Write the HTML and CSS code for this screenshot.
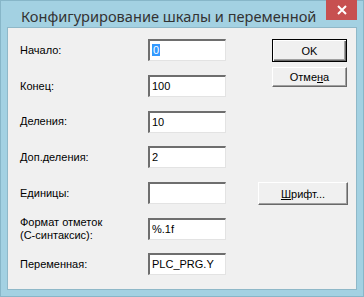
FILE: index.html
```html
<!DOCTYPE html>
<html lang="ru">
<head>
    <meta charset="UTF-8">
    <title>Конфигурирование шкалы и переменной</title>
    <link rel="stylesheet" href="styles.css">
</head>
<body>
    <div class="window">
        <div class="titlebar">
            <span class="title">Конфигурирование шкалы и переменной</span>
            <button class="close-btn">
                <svg width="10" height="10" viewBox="0 0 10 10">
                    <path d="M1 1 L9 9 M9 1 L1 9" stroke="#fff" stroke-width="2"/>
                </svg>
            </button>
        </div>

        <div class="client">
            <div class="form">
                <label class="label">Начало:</label>
                <div class="field"><span class="selected">0</span></div>

                <label class="label">Конец:</label>
                <div class="field">100</div>

                <label class="label">Деления:</label>
                <div class="field">10</div>

                <label class="label">Доп.деления:</label>
                <div class="field">2</div>

                <label class="label">Единицы:</label>
                <div class="field"></div>

                <label class="label">Формат отметок<br>(С-синтаксис):</label>
                <div class="field">%.1f</div>

                <label class="label">Переменная:</label>
                <div class="field">PLC_PRG.Y</div>

                <div class="buttons">
                    <button class="btn btn-default">OK</button>
                    <button class="btn btn-cancel">Отме<u>н</u>а</button>
                    <button class="btn btn-font"><u>Ш</u>рифт...</button>
                </div>
            </div>
        </div>
    </div>
</body>
</html>
```

FILE: styles.css
```css
body {
    margin: 0;
    background-color: #fff;
}

.window {
    width: 364px;
    height: 297px;
    box-sizing: border-box;
    background-color: #a3d1e2;
    border: 1px solid #87b6c8;
    display: flex;
    flex-direction: column;
}

.titlebar {
    height: 29px;
    display: flex;
    align-items: flex-start;
}

.title {
    font-family: "Noto Sans", sans-serif;
    font-size: 14.6px;
    color: #333;
    margin-left: 20px;
    margin-top: 5px;
}

.close-btn {
    margin-left: auto;
    margin-right: 6px;
    width: 31px;
    height: 20px;
    margin-top: -1px;
    border: none;
    padding: 0;
    background-color: #c75050;
    display: flex;
    align-items: center;
    justify-content: center;
}

.client {
    margin: 0 6px 6px 6px;
    flex: 1;
    background-color: #f0f0f0;
    border: 1px solid #8fb8c8;
    font-family: "Liberation Sans", Arial, sans-serif;
    font-size: 11px;
    color: #000;
}

.form {
    display: grid;
    grid-template-columns: 128px 78px 1fr;
    grid-auto-rows: 35.67px;
    padding: 11px 0 0 12px;
}

.label {
    grid-column: 1;
    align-self: start;
    height: 22px;
    display: flex;
    align-items: center;
    line-height: 13px;
}

.field {
    grid-column: 2;
    height: 22px;
    box-sizing: border-box;
    background-color: #fff;
    border-top: 2px solid #6e6e6e;
    border-left: 2px solid #6e6e6e;
    border-right: 1px solid #e3e3e3;
    border-bottom: 1px solid #e3e3e3;
    box-shadow: inset -1px -1px 0 #fff;
    padding: 2px 0 0 2px;
    line-height: 14px;
    white-space: nowrap;
}

.selected {
    background-color: #3399ff;
    color: #fff;
    padding: 0 1px;
}

.buttons {
    grid-column: 3;
    grid-row: 1 / 8;
    display: flex;
    flex-direction: column;
    align-items: flex-end;
    padding-right: 9px;
}

.btn {
    font-family: "Liberation Sans", Arial, sans-serif;
    font-size: 11px;
    color: #000;
    background-color: #f0f0f0;
    width: 75px;
    height: 20px;
    padding: 0;
    border-top: 1px solid #fff;
    border-left: 1px solid #fff;
    border-right: 1px solid #696969;
    border-bottom: 1px solid #696969;
    box-shadow: inset -1px -1px 0 #a0a0a0;
    box-sizing: border-box;
}

.btn-default {
    height: 23px;
    border: 1px solid #000;
    box-shadow: inset 1px 1px 0 #fff, inset -1px -1px 0 #696969, inset -2px -2px 0 #a0a0a0;
}

.btn-cancel {
    margin-top: 5px;
}

.btn-font {
    width: 90px;
    height: 23px;
    margin-top: 95px;
    margin-right: -1px;
}
```
